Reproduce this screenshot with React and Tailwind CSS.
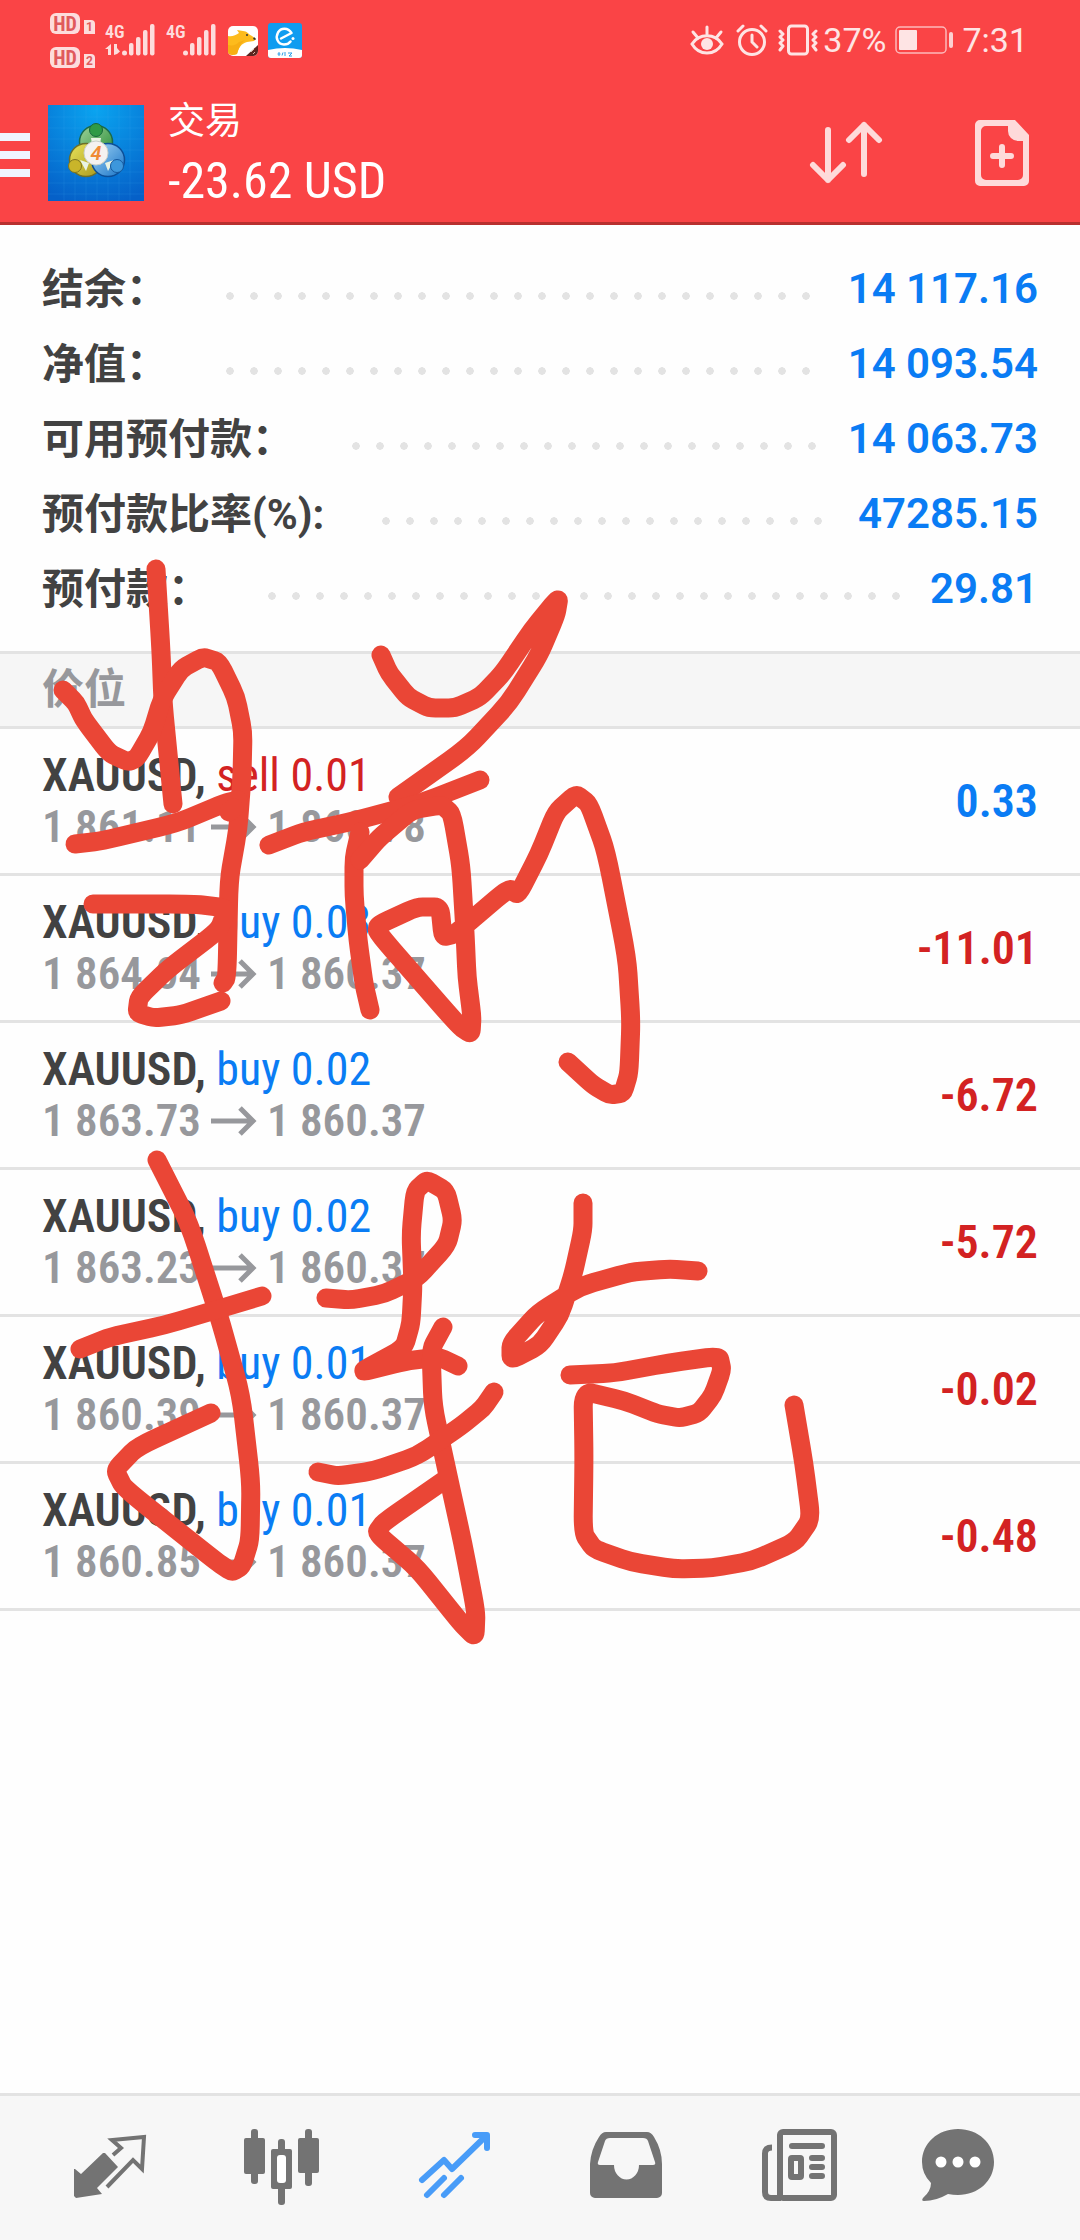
import React from 'react';

const summary = [
  { label: '结余：', value: '14 117.16' },
  { label: '净值：', value: '14 093.54' },
  { label: '可用预付款：', value: '14 063.73' },
  { label: '预付款比率(%):', value: '47285.15' },
  { label: '预付款：', value: '29.81' },
];

const positions = [
  { symbol: 'XAUUSD', side: 'sell', volume: '0.01', open: '1 861.11', current: '1 860.78', profit: '0.33' },
  { symbol: 'XAUUSD', side: 'buy', volume: '0.03', open: '1 864.04', current: '1 860.37', profit: '-11.01' },
  { symbol: 'XAUUSD', side: 'buy', volume: '0.02', open: '1 863.73', current: '1 860.37', profit: '-6.72' },
  { symbol: 'XAUUSD', side: 'buy', volume: '0.02', open: '1 863.23', current: '1 860.37', profit: '-5.72' },
  { symbol: 'XAUUSD', side: 'buy', volume: '0.01', open: '1 860.39', current: '1 860.37', profit: '-0.02' },
  { symbol: 'XAUUSD', side: 'buy', volume: '0.01', open: '1 860.85', current: '1 860.37', profit: '-0.48' },
];

// pen strokes, as x,y pairs on a 1080 x 2240 canvas
const strokes = [
  [156, 569, 161, 651, 163, 703, 173, 804],
  [63, 690, 76, 703, 84, 720, 109, 753, 128, 762, 137, 758, 152, 732, 162, 699, 181, 669, 203, 657, 219, 662, 236, 697, 243, 732, 242, 777, 238, 829, 229, 880, 227, 977, 223, 983],
  [75, 844, 101, 841, 177, 823, 225, 803, 238, 800],
  [229, 812, 234, 808],
  [93, 904, 194, 904, 227, 908, 219, 930, 168, 969, 139, 997, 137, 1013, 154, 1018, 181, 1015, 221, 1001],
  [381, 655, 389, 673, 408, 697, 429, 708, 455, 708, 480, 697, 503, 673, 532, 630, 559, 597, 556, 615, 539, 655, 509, 703, 467, 748, 398, 797],
  [269, 845, 303, 832, 354, 821, 421, 803, 480, 780],
  [360, 832, 354, 858, 354, 895, 358, 940, 364, 984, 370, 1010],
  [360, 860, 379, 838, 412, 810, 442, 805, 452, 814, 461, 866, 465, 932, 467, 977, 472, 1017, 471, 1034, 459, 1026, 377, 932, 378, 925, 417, 907, 440, 907, 443, 937, 455, 934, 509, 888, 518, 895, 539, 854, 556, 812, 576, 794, 589, 804, 606, 851, 627, 958, 631, 1021, 629, 1073, 623, 1093, 610, 1095, 593, 1085, 568, 1062],
  [157, 1160, 189, 1223, 219, 1316, 241, 1395, 251, 1482, 250, 1540, 242, 1566, 232, 1572, 217, 1562, 124, 1488, 115, 1470, 137, 1447, 211, 1413],
  [80, 1349, 110, 1337, 165, 1325, 219, 1309, 262, 1296],
  [326, 1298, 351, 1300, 384, 1294, 417, 1278, 447, 1245, 453, 1220, 446, 1191, 427, 1180, 415, 1191, 411, 1234, 413, 1285, 411, 1323, 404, 1348, 358, 1373, 406, 1361, 439, 1357, 458, 1366],
  [443, 1327, 431, 1349, 433, 1406, 447, 1471, 463, 1544, 476, 1612, 475, 1637, 461, 1623, 417, 1568, 376, 1533, 384, 1522, 446, 1479],
  [318, 1472, 338, 1476, 373, 1471, 417, 1456, 461, 1426, 483, 1408, 494, 1392],
  [583, 1203, 583, 1230, 573, 1275, 560, 1315, 540, 1345, 511, 1360, 511, 1343, 538, 1313, 581, 1286, 631, 1272, 669, 1269, 698, 1271],
  [570, 1375, 614, 1373, 669, 1363, 719, 1356, 722, 1370, 713, 1395, 699, 1413, 680, 1418, 658, 1414, 625, 1401, 583, 1391, 584, 1457, 583, 1533, 594, 1549, 631, 1562, 675, 1569, 712, 1568, 752, 1561, 795, 1542, 811, 1519, 804, 1464, 794, 1405],
];

const toPath = (s) => {
  let d = `M${s[0]} ${s[1]}`;
  for (let i = 2; i < s.length - 2; i += 2) {
    const px = s[i - 2], py = s[i - 1], x = s[i], y = s[i + 1], nx = s[i + 2], ny = s[i + 3];
    // round each corner over a quarter of its two sides
    d += ` L${x + (px - x) / 4} ${y + (py - y) / 4} Q${x} ${y} ${x + (nx - x) / 4} ${y + (ny - y) / 4}`;
  }
  return `${d} L${s[s.length - 2]} ${s[s.length - 1]}`;
};

const HdBadge = ({ sim }) => (
  <div className="flex items-end gap-1">
    <span className="flex h-[21px] w-[30px] items-center justify-center rounded-md bg-[#fddcdc] font-['Roboto_Condensed',sans-serif] text-[20px] leading-5 font-bold text-[#e05a5c]">
      HD
    </span>
    <span className="flex h-[14px] w-[11px] items-center justify-center rounded-tr-sm bg-[#fddcdc] font-['Roboto',sans-serif] text-[12px] leading-3 font-bold text-[#e05a5c]">
      {sim}
    </span>
  </div>
);

const Signal = ({ data }) => (
  <svg viewBox="0 0 52 34" className="h-[34px] w-[52px]" fill="#fddcdc">
    <text x="0" y="16" fontFamily="Roboto Condensed, sans-serif" fontSize="18" fontWeight="600">4G</text>
    {data && <path d="M6 22v11H3v-6H0zM9 22h3v4l3 3.500-3 2.500-3 1z" />}
    <circle cx="19.500" cy="31" r="2.500" />
    <rect x="24" y="21" width="4.500" height="12.500" rx="2" />
    <rect x="31" y="15" width="4.500" height="18.500" rx="2" />
    <rect x="38" y="8" width="4.500" height="25.500" rx="2" />
    <rect x="45" y="2" width="4.500" height="31.500" rx="2" />
  </svg>
);

const FoxApp = () => (
  <svg viewBox="0 0 30 30" className="size-[30px]">
    <rect width="30" height="30" rx="5" fill="#fff" />
    <path d="M0 10c4 1 8-1 11-3L9 4l6 1c4 0 5 3 9 5l4 3-2 2-7 1c-6 2-8 5-10 12-5 1-9 1-9-3z" fill="#fdbb1c" />
    <path d="M0 19c5 1 8 0 11-3l6-2c-5 4-6 8-8 14-5 2-9 1-9-3z" fill="#f7ae13" />
    <path d="m26 11 2 2-1 1-2-1z" fill="#333" />
    <circle cx="19" cy="9" r="1" fill="#333" />
    <path d="M30 19v6a5 5 0 0 1-5 5h-7z" fill="#5b2520" />
    <path d="m23 26 3-3M25 28l2-2" stroke="#d8b8a8" strokeWidth="1" />
  </svg>
);

const ElemeApp = () => (
  <svg viewBox="0 0 34 35" className="h-[35px] w-[34px]">
    <rect width="34" height="35" rx="3" fill="#0f9cf0" />
    <path d="M0 27q17-4 34 0v5a3 3 0 0 1-3 3H3a3 3 0 0 1-3-3z" fill="#fff" />
    <path d="M13 15.500 23.500 10C20 4.500 13 4.500 10 9.500c-3 5.500 0 12 6 12 3 0 5-1 6.500-3" fill="none" stroke="#fff" strokeWidth="2.500" strokeLinecap="round" strokeLinejoin="round" />
    <circle cx="25" cy="15.500" r="1.500" fill="#fff" />
    <path d="M11 29v4M9.500 31h3M15 29.500l-1 3M17 29v4M20 30h4l-3 3h3" stroke="#2a9fe8" strokeWidth="1" fill="none" />
  </svg>
);

const StatusBar = () => (
  <div className="flex h-[86px] items-start justify-between pr-[52px] pl-[50px]">
    <div className="flex items-start">
      <div className="mt-[13px] flex flex-col gap-[13px]">
        <HdBadge sim="1" />
        <HdBadge sim="2" />
      </div>
      <div className="mt-[22px] ml-[10px] flex gap-[9px]">
        <Signal data />
        <Signal />
      </div>
      <div className="mt-[26px] ml-[10px]"><FoxApp /></div>
      <div className="mt-[23px] ml-[10px]"><ElemeApp /></div>
    </div>
    <div className="mt-[20px] flex items-center font-['Roboto',sans-serif] text-[34px] leading-10 text-[#fee4e4]">
      <svg viewBox="0 0 34 32" className="h-8 w-[34px]" fill="none" stroke="#fee4e4" strokeWidth="3" strokeLinecap="round">
        <path d="M2 20C9 9 25 9 32 20 25 32 9 32 2 20z" />
        <circle cx="17" cy="20" r="6" fill="#fee4e4" stroke="none" />
        <path d="M17 3v7M3 8l5 6M31 8l-5 6" />
      </svg>
      <svg viewBox="0 0 32 32" className="ml-3 size-8" fill="none" stroke="#fee4e4" strokeWidth="3" strokeLinecap="round">
        <circle cx="16" cy="18" r="12.500" />
        <path d="M16 11v7l5 5M2 7l5-5M30 7l-5-5" />
      </svg>
      <svg viewBox="0 0 40 32" className="ml-[10px] h-8 w-10" fill="none" stroke="#fee4e4" strokeWidth="3" strokeLinecap="round" strokeLinejoin="round">
        <rect x="10.500" y="2" width="19" height="28" rx="3" />
        <path d="m2 7 3 3-3 3 3 3-3 3 3 3-3 4M38 7l-3 3 3 3-3 3 3 3-3 3 3 4" strokeWidth="3" />
      </svg>
      <span className="ml-[5px]">37%</span>
      <svg viewBox="0 0 58 28" className="ml-[9px] h-7 w-[58px]">
        <rect x="1" y="1" width="50" height="26" rx="4" fill="none" stroke="#fdb9ba" strokeWidth="1.500" />
        <rect x="4" y="4" width="18" height="20" rx="1" fill="#fee4e4" />
        <rect x="54" y="6" width="4" height="16" rx="2" fill="#fdd0d1" />
      </svg>
      <span className="ml-[9px]">7:31</span>
    </div>
  </div>
);

const Logo = () => (
  <svg viewBox="0 0 96 96" className="size-24">
    <defs>
      <radialGradient id="sky" cx="50%" cy="5%" r="100%">
        <stop offset="0" stopColor="#0aa4f0" />
        <stop offset="1" stopColor="#0560c8" />
      </radialGradient>
      <linearGradient id="green" x1="0" y1="0" x2="1" y2="1">
        <stop offset="0" stopColor="#9fd39a" />
        <stop offset="1" stopColor="#258a33" />
      </linearGradient>
      <linearGradient id="yellow" x1="0" y1="0" x2="1" y2="1">
        <stop offset="0" stopColor="#e8e45a" />
        <stop offset="1" stopColor="#a8951b" />
      </linearGradient>
      <linearGradient id="blue" x1="0" y1="0" x2="1" y2="1">
        <stop offset="0" stopColor="#a4d6f6" />
        <stop offset="1" stopColor="#1672c6" />
      </linearGradient>
    </defs>
    <rect width="96" height="96" fill="url(#sky)" />
    <path d="M16 0v96M27 0v96M38 0v96M49 0v96M60 0v96M71 0v96M82 0v96M0 12h96M0 23h96M0 34h96M0 45h96M0 56h96M0 67h96M0 78h96M0 89h96" stroke="#4ab4f2" strokeOpacity=".15" />
    <circle cx="48" cy="37" r="16.500" fill="url(#green)" stroke="#1c6a4a" strokeWidth="1.500" />
    <circle cx="38" cy="55" r="16.500" fill="url(#yellow)" stroke="#6b6f2a" strokeWidth="1.500" />
    <circle cx="60" cy="55" r="16.500" fill="url(#blue)" stroke="#0c4f98" strokeWidth="1.500" />
    <path d="M43 33h10l-1 6h-8zM32 55l9 3-3 8zM66 55l-9 3 3 8z" fill="#e9f3e4" />
    <circle cx="48" cy="25" r="6.500" fill="#2f9a45" stroke="#17673a" />
    <circle cx="27" cy="61" r="6.500" fill="#c9b52a" stroke="#7f7420" />
    <circle cx="69" cy="61" r="6.500" fill="#3d97dc" stroke="#14589f" />
    <circle cx="48" cy="48" r="12" fill="#f4f2f0" stroke="#c9cfc9" />
    <text x="48" y="55" textAnchor="middle" fontFamily="Roboto, sans-serif" fontSize="20" fontStyle="italic" fontWeight="600" fill="#f08a35">4</text>
  </svg>
);

const Header = () => (
  <header className="border-b-[3px] border-[#b8302f] bg-[#fa4446]">
    <StatusBar />
    <div className="flex h-[136px] items-start">
      <button aria-label="Menu" className="mt-[47px] flex w-[30px] flex-col gap-[10px]">
        <span className="h-2 w-full bg-[#f0f4fe]" />
        <span className="h-2 w-full bg-[#f0f4fe]" />
        <span className="h-2 w-full bg-[#f0f4fe]" />
      </button>
      <div className="mt-[19px] ml-[18px]"><Logo /></div>
      <div className="mt-[7px] ml-6 flex-1 text-white">
        <h1 className="font-['Noto_Sans_CJK_SC',sans-serif] text-[37px] leading-[50px]">交易</h1>
        <p className="mt-2 font-['Roboto_Condensed',sans-serif] text-[50px] leading-[60px]">-23.62 USD</p>
      </div>
      <button aria-label="Sort" className="mt-[34px]">
        <svg viewBox="0 0 74 66" className="h-[66px] w-[74px]" fill="none" stroke="#fedada" strokeWidth="6" strokeLinecap="round" strokeLinejoin="round">
          <path d="M19 10v50M4 45l15 15 15-15M55 54V5M40 20 55 5l15 15" />
        </svg>
      </button>
      <button aria-label="New order" className="mt-[33px] mr-[50px] ml-[91px]">
        <svg viewBox="0 0 56 68" className="h-[68px] w-14" fill="#fedada">
          <path fillRule="evenodd" d="M6 1h35l14 15v46a5 5 0 0 1-5 5H6a5 5 0 0 1-5-5V6a5 5 0 0 1 5-5zm6 6a5 5 0 0 0-5 5v44a5 5 0 0 0 5 5h32a5 5 0 0 0 5-5V22h-5a10 10 0 0 1-10-10V7z" />
          <path d="M28 28v18M19 37h18" stroke="#fedada" strokeWidth="6" strokeLinecap="round" />
        </svg>
      </button>
    </div>
  </header>
);

const SummaryRow = ({ label, value }) => (
  <div className="flex h-[75px] items-center">
    <dt className="pt-[3px] font-['Roboto',_'Noto_Sans_CJK_SC',sans-serif] text-[42px] leading-[60px] font-bold text-[#424242]">{label}</dt>
    <span className="mt-[14px] mr-[26px] ml-[50px] h-2 flex-1 bg-[radial-gradient(circle,#e3e3e3_3.5px,transparent_4px)] bg-[length:24px_8px] bg-repeat-x" />
    <dd className="font-['Roboto',sans-serif] text-[42px] leading-[60px] font-semibold text-[#0a7cf4]">{value}</dd>
  </div>
);

const Position = ({ symbol, side, volume, open, current, profit }) => (
  <li className="flex h-[147px] items-center justify-between border-b-[3px] border-[#e3e3e3] px-[42px] font-['Roboto_Condensed',sans-serif] text-[46px] leading-[51px]">
    <div>
      <p className="text-[#424242]">
        <span className="font-semibold">{symbol},</span>{' '}
        <span className={side === 'sell' ? 'text-[#d32222]' : 'text-[#0a7cf4]'}>{side} {volume}</span>
      </p>
      <p className="flex items-center gap-[10px] text-[45px] font-semibold text-[#97989c]">
        {open}
        <svg viewBox="0 0 46 30" className="h-[30px] w-[46px]" fill="none" stroke="#97989c" strokeWidth="5">
          <path d="M0 15h42M29 2l13 13-13 13" />
        </svg>
        {current}
      </p>
    </div>
    <span className={profit.startsWith('-') ? 'font-semibold text-[#d32222]' : 'font-semibold text-[#0a7cf4]'}>{profit}</span>
  </li>
);

const tabs = [
  {
    name: '行情',
    icon: (
      <>
        <path d="m5 41 6 5 22-21 2 0 13 14-21 21 5 6-26 4-2-2V41z" />
        <path d="m43 27 8-7-9-8 32-3-2 32-9-9-26 27" fill="none" stroke="currentColor" strokeWidth="4" />
      </>
    ),
  },
  {
    name: '图表',
    icon: (
      <>
        <rect x="9" y="1" width="7" height="55" rx="3" />
        <rect x="2" y="10" width="21" height="36" rx="2" />
        <rect x="36" y="11" width="7" height="66" rx="3" />
        <rect x="29" y="21" width="21" height="40" rx="2" />
        <rect x="35" y="27" width="9" height="28" rx="3" fill="#fff" />
        <rect x="63" y="1" width="7" height="57" rx="3" />
        <rect x="56" y="10" width="21" height="35" rx="2" />
      </>
    ),
  },
  {
    name: '交易',
    active: true,
    icon: (
      <g fill="none" stroke="currentColor" strokeWidth="6" strokeLinecap="round" strokeLinejoin="round">
        <path d="m7 52 22-20 8 9L71 8M60 7h12v13" />
        <path d="m12 67 17-17M29 67l17-17" />
      </g>
    ),
  },
  {
    name: '历史',
    icon: (
      <path
        fillRule="evenodd"
        d="M19 4h41q4 0 7 5 8 13 8 27v29a5 5 0 0 1-5 5H8a5 5 0 0 1-5-5V36Q4 21 12 9q3-5 7-5zm4 6q-4 0-5 3l-7 21q-1 3 2 3h14a12 14 0 0 0 25 0h14q3 0 2-3l-7-21q-1-3-5-3z"
      />
    ),
  },
  {
    name: '新闻',
    icon: (
      <g fill="none" stroke="currentColor" strokeWidth="6">
        <rect x="21" y="4" width="54" height="66" rx="3" />
        <path d="M13 19.500q-7 0-7 6V64q0 6 6 6h10" />
        <path d="M33 18h30M53 30h10M53 39h10M53 48h10" strokeLinecap="round" />
        <rect x="32" y="30" width="10" height="19" rx="1" />
      </g>
    ),
  },
  {
    name: '消息',
    icon: (
      <>
        <path d="M40 1c20 0 36 14 36 33S60 67 40 67q-5 0-10-1-12 7-24 7-3 0-1-3 8-7 8-15Q4 46 4 34C4 15 20 1 40 1z" />
        <g fill="#fff">
          <circle cx="23" cy="34" r="5.500" />
          <circle cx="40" cy="34" r="5.500" />
          <circle cx="57" cy="34" r="5.500" />
        </g>
      </>
    ),
  },
];

const TabBar = () => (
  <nav className="flex h-[147px] items-center border-t-[3px] border-[#e3e3e3] bg-[#f7f7f7] pr-[49px] pl-6">
    {tabs.map((tab) => (
      <button
        key={tab.name}
        aria-label={tab.name}
        className={`flex flex-1 justify-center last:w-[146px] last:flex-none ${tab.active ? 'text-[#489cf8]' : 'text-[#737373]'}`}
      >
        <svg viewBox="0 0 80 80" className="size-20" fill="currentColor">{tab.icon}</svg>
      </button>
    ))}
  </nav>
);

const App = () => (
  <div className="relative flex min-h-screen flex-col bg-[#fefefe]">
    <Header />
    <main className="flex-1">
      <dl className="px-[42px] pt-[26px] pb-[25px]">
        {summary.map((row) => <SummaryRow key={row.label} {...row} />)}
      </dl>
      <h2 className="flex h-[78px] items-center border-y-[3px] border-[#e3e3e3] bg-[#f6f6f6] px-[42px] pb-2 font-['Noto_Sans_CJK_SC',sans-serif] text-[42px] leading-[60px] font-bold text-[#97989c]">
        价位
      </h2>
      <ul>
        {positions.map((p, i) => <Position key={i} {...p} />)}
      </ul>
    </main>
    <TabBar />
    <svg viewBox="0 0 1080 2240" className="pointer-events-none absolute top-0 left-0 w-full" fill="none" stroke="#ea4636" strokeWidth="19" strokeLinecap="round" strokeLinejoin="round">
      {strokes.map((s, i) => <path key={i} d={toPath(s)} />)}
    </svg>
  </div>
);

export default App;
